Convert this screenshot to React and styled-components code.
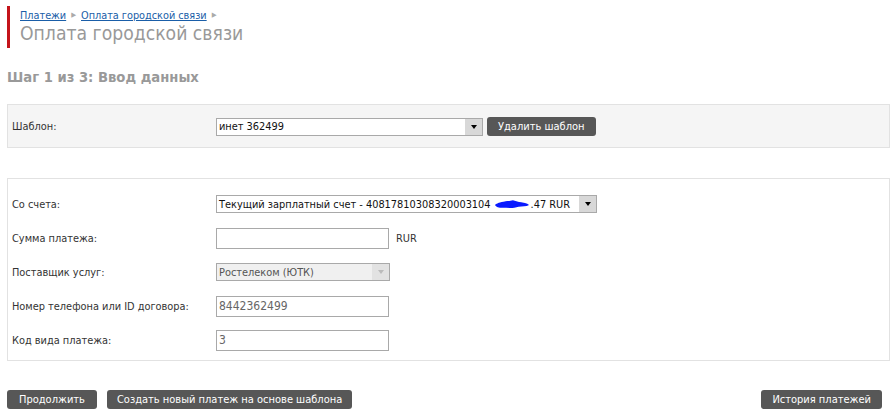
import React from "react";
import styled, { createGlobalStyle } from "styled-components";

const Global = createGlobalStyle`
  html, body { margin: 0; padding: 0; background: #fff; }
  body { font-family: "DejaVu Sans Condensed", "DejaVu Sans", Tahoma, sans-serif; font-size: 11px; color: #333; }
`;

const Page = styled.div`
  width: 895px;
  height: 415px;
  overflow: hidden;
  padding: 6px 5px 0 7px;
  box-sizing: border-box;
`;

const Header = styled.div`
  border-left: 3px solid #c4141b;
  padding: 3px 0 2px 10px;
  height: 37px;
`;

const Crumbs = styled.div`
  display: flex;
  align-items: center;
  gap: 5px;
  font-size: 10.8px;
  line-height: 13px;
`;

const Crumb = styled.a`
  color: #1a5ea8;
  text-decoration: underline;
`;

const Sep = styled.span`
  color: #aaa;
  font-size: 7px;
`;

const Title = styled.h1`
  margin: 0;
  font-weight: normal;
  font-size: 19.2px;
  line-height: 24px;
  color: #999;
`;

const Step = styled.h2`
  margin: 22px 0 0 0;
  font-family: "DejaVu Sans", Tahoma, sans-serif;
  font-size: 13.2px;
  font-weight: bold;
  color: #999;
  line-height: 16px;
`;

const Panel = styled.div`
  margin-top: ${p => p.$mt}px;
  border: 1px solid #e2e2e2;
  background: ${p => (p.$grey ? "#f5f5f5" : "#fff")};
  padding: ${p => p.$pad};
  display: flex;
  flex-direction: column;
  gap: ${p => p.$gap || 0}px;
`;

const Row = styled.div`
  display: flex;
  align-items: center;
  height: ${p => p.$h || 20}px;
`;

const Label = styled.div`
  width: 204px;
  padding-left: 4px;
  font-size: 10.9px;
  color: #333;
  flex-shrink: 0;
`;

const SelectBox = styled.div`
  width: ${p => p.$w}px;
  height: 18px;
  border: 1px solid #a9a9a9;
  box-sizing: border-box;
  background: ${p => (p.$disabled ? "#f0f0f0" : "#fff")};
  display: flex;
  align-items: stretch;
  font-size: 10.9px;
  color: ${p => (p.$disabled ? "#555" : "#111")};
`;

const SelectText = styled.div`
  flex: 1;
  padding-left: 2px;
  display: flex;
  align-items: center;
  white-space: nowrap;
  overflow: hidden;
`;

const Arrow = styled.div`
  width: 17px;
  background: ${p => (p.$disabled ? "#e2e2e2" : "#d8d8d8")};
  display: flex;
  align-items: center;
  justify-content: center;
  &::after {
    content: "";
    border-left: 3px solid transparent;
    border-right: 3px solid transparent;
    border-top: 4px solid ${p => (p.$disabled ? "#bbb" : "#000")};
  }
`;

const Input = styled.div`
  width: 173px;
  height: 21px;
  border: 1px solid #a9a9a9;
  box-sizing: border-box;
  background: #fff;
  padding-left: 2px;
  display: flex;
  align-items: center;
  font-size: 12px;
  color: #666;
`;

const Unit = styled.span`
  margin-left: 7px;
  font-size: 10.9px;
  color: #333;
`;

const Button = styled.button`
  height: 19px;
  padding: 0 ${p => p.$px || 12}px;
  border: none;
  border-radius: 3px;
  background: #575757;
  color: #fff;
  font-family: inherit;
  font-size: 11px;
  line-height: 19px;
  margin-left: ${p => p.$ml || 0}px;
  cursor: pointer;
`;

const Footer = styled.div`
  margin-top: 29px;
  display: flex;
  align-items: center;
  padding-right: 8px;
`;

const Spacer = styled.div`
  flex: 1;
`;

const Scribble = () => (
  <svg width="36" height="11" viewBox="0 0 38 11" style={{ margin: "0 1px 0 3px" }}>
    <path d="M1 6 C4 3, 9 3, 13 2 C18 1, 22 3, 27 3 C31 3, 35 4, 37 6 C34 8, 30 7, 26 8 C20 10, 14 9, 9 9 C5 9, 2 8, 1 6 Z" fill="#0a1bff" />
    <path d="M6 4 L20 1 L30 4 L22 6 Z" fill="#0a1bff" />
  </svg>
);

export default function App() {
  return (
    <Page>
      <Global />
      <Header>
        <Crumbs>
          <Crumb>Платежи</Crumb>
          <Sep>▶</Sep>
          <Crumb>Оплата городской связи</Crumb>
          <Sep>▶</Sep>
        </Crumbs>
        <Title>Оплата городской связи</Title>
      </Header>
      <Step>Шаг 1 из 3: Ввод данных</Step>
      <Panel $mt={18} $grey $pad="12px 0 11px 0">
        <Row $h={19}>
          <Label>Шаблон:</Label>
          <SelectBox $w={267}>
            <SelectText>инет 362499</SelectText>
            <Arrow />
          </SelectBox>
          <Button $ml={4} $px={11}>Удалить шаблон</Button>
        </Row>
      </Panel>
      <Panel $mt={30} $pad="15px 0 10px 0" $gap={14}>
        <Row>
          <Label>Со счета:</Label>
          <SelectBox $w={381}>
            <SelectText>
              Текущий зарплатный счет - 40817810308320003104
              <Scribble />
              .47 RUR
            </SelectText>
            <Arrow />
          </SelectBox>
        </Row>
        <Row>
          <Label>Сумма платежа:</Label>
          <Input />
          <Unit>RUR</Unit>
        </Row>
        <Row>
          <Label>Поставщик услуг:</Label>
          <SelectBox $w={174} $disabled>
            <SelectText>Ростелеком (ЮТК)</SelectText>
            <Arrow $disabled />
          </SelectBox>
        </Row>
        <Row>
          <Label>Номер телефона или ID договора:</Label>
          <Input>8442362499</Input>
        </Row>
        <Row>
          <Label>Код вида платежа:</Label>
          <Input>3</Input>
        </Row>
      </Panel>
      <Footer>
        <Button $px={12}>Продолжить</Button>
        <Button $ml={10} $px={10}>Создать новый платеж на основе шаблона</Button>
        <Spacer />
        <Button $px={11}>История платежей</Button>
      </Footer>
    </Page>
  );
}
